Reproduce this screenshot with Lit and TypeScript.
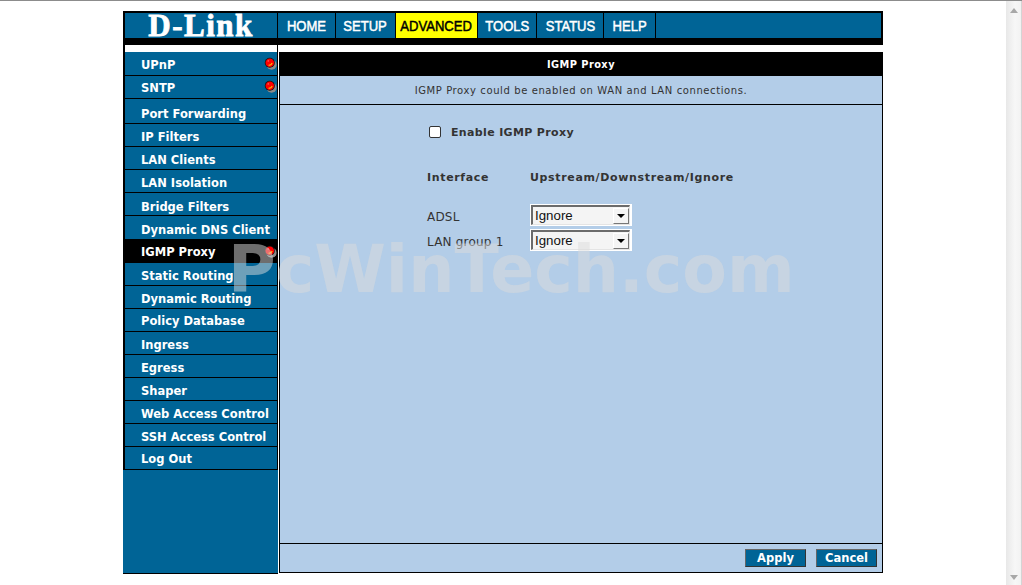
import { LitElement, html, css, svg } from "lit";
import { customElement } from "lit/decorators.js";

const TABS = [
  { label: "HOME", w: 58 },
  { label: "SETUP", w: 60 },
  { label: "ADVANCED", w: 82, active: true },
  { label: "TOOLS", w: 59 },
  { label: "STATUS", w: 67 },
  { label: "HELP", w: 52 },
];

const ROWS = [
  { label: "UPnP", h: 24, pt: 2, dot: true, dy: 5 },
  { label: "SNTP", h: 23, pt: 2, dot: true, dy: 4 },
  { label: "Port Forwarding", h: 25, pt: 5 },
  { label: "IP Filters", h: 23, pt: 3 },
  { label: "LAN Clients", h: 23, pt: 3 },
  { label: "LAN Isolation", h: 23, pt: 3 },
  { label: "Bridge Filters", h: 23, pt: 5 },
  { label: "Dynamic DNS Client", h: 24, pt: 5 },
  { label: "IGMP Proxy", h: 23, pt: 1, dot: true, dy: 5, active: true },
  { label: "Static Routing", h: 23, pt: 3 },
  { label: "Dynamic Routing", h: 23, pt: 3 },
  { label: "Policy Database", h: 23, pt: 1 },
  { label: "Ingress", h: 23, pt: 3 },
  { label: "Egress", h: 23, pt: 3 },
  { label: "Shaper", h: 23, pt: 3 },
  { label: "Web Access Control", h: 23, pt: 3 },
  { label: "SSH Access Control", h: 23, pt: 3 },
  { label: "Log Out", h: 23, pt: 1 },
];

const ball = svg`<svg width="13" height="13" viewBox="0 0 13 13">
  <circle cx="7.6" cy="7.8" r="5" fill="#8a8a8a"/>
  <circle cx="5.8" cy="5.8" r="5" fill="#111"/>
  <circle cx="5.8" cy="5.8" r="4.3" fill="#ff0000"/>
  <path d="M4.6 8.4 Q7.4 8.2 8.2 6" stroke="#ffb400" stroke-width="1.2" fill="none"/>
  <circle cx="4.2" cy="3.9" r="0.7" fill="#ff8a8a"/>
</svg>`;

@customElement("select-box")
class SelectBox extends LitElement {
  static styles = css`
    :host { display: block; }
    .halo { width: 102px; height: 22px; box-sizing: border-box; background: #fff; padding: 1px 2px 1px 1px; }
    .box {
      height: 100%; box-sizing: border-box;
      border: solid #6b6b6b; border-width: 2px 1px 1px 2px;
      border-bottom-color: #e4e4e4; border-right-color: #e4e4e4;
      background: #f4f4f4;
      display: flex; align-items: center; justify-content: space-between;
      font: 13.3px "Liberation Sans", Arial, sans-serif; color: #111;
      padding-left: 2px;
    }
    .arrow {
      width: 16px; height: 16px; box-sizing: border-box; background: #f4f4f4;
      border: 1px solid; border-color: #fff #777 #777 #fff;
      display: flex; align-items: center; justify-content: center;
    }
    .arrow i { width: 0; height: 0; border: 4px solid transparent; border-top: 4px solid #000; border-bottom: 0; }
  `;
  render() {
    return html`<div class="halo"><div class="box"><span>Ignore</span><div class="arrow"><i></i></div></div></div>`;
  }
}

@customElement("app-root")
export class AppRoot extends LitElement {
  static styles = css`
    :host { display: block; position: relative; width: 1022px; height: 585px; overflow: hidden; background: #fff; font-family: "DejaVu Sans", Verdana, sans-serif; }
    .topline { height: 1px; background: #8c8c8c; }
    .shell { display: flex; }
    .page { width: 1006px; padding: 10px 0 0 123px; box-sizing: border-box; }
    .scroll {
      width: 16px; height: 584px; box-sizing: border-box; border-right: 1px solid #d4d4d4;
      background: linear-gradient(to right, #e8e8e8, #f7f7f7 60%, #f2f2f2);
      display: flex; flex-direction: column; justify-content: space-between; align-items: center;
      padding: 7px 0 5px;
    }
    .up { width: 0; height: 0; border: 4px solid transparent; border-top: 0; border-bottom: 5px solid #a8a8a8; }
    .down { width: 0; height: 0; border: 4px solid transparent; border-bottom: 0; border-top: 5px solid #a8a8a8; }
    .frame { width: 760px; }
    .head {
      height: 25px; display: flex; background: #006496;
      border: solid #000; border-width: 2px 2px 0 2px;
    }
    .logo {
      width: 152px; border-right: 1px solid #000; color: #fff; text-align: center;
      font: bold 31px/26px "Liberation Serif", serif; letter-spacing: 1.5px;
      -webkit-text-stroke: 0.8px #fff;
    }
    .tab {
      box-sizing: border-box; border-right: 1px solid #000; color: #fff; text-align: center;
      font: 15px/26px "Liberation Sans", sans-serif; flex: none; white-space: nowrap;
      -webkit-text-stroke: 0.5px currentColor;
    }
    .tab span { display: inline-block; transform: scaleX(0.87); transform-origin: center; margin: 0 -8px; }
    .tab.active { background: #ff0; color: #000; }
    .band { height: 7px; background: #000; }
    .gap { height: 7px; display: flex; }
    .gap .l { width: 152px; border-left: 2px solid #000; border-right: 1px solid #000; }
    .body { display: flex; align-items: flex-start; }
    .side { width: 155px; background: #006496; border-bottom: 1px solid #000; height: 522px; box-sizing: border-box; }
    .rows { border-left: 2px solid #000; border-right: 1px solid #000; }
    .row {
      box-sizing: border-box; border-bottom: 1px solid #000; display: flex; align-items: center;
      padding-left: 16px; color: #fff; font-size: 11.5px; font-weight: 700; position: relative;
      white-space: nowrap;
    }
    .row.active { background: #000; }
    .dot { position: absolute; right: 0; line-height: 0; }
    .sep { width: 1px; height: 521px; background: #fff; }
    .main { flex: 1; height: 521px; box-sizing: border-box; display: flex; flex-direction: column; background: #b3cde8; border: solid #000; border-width: 0 1px 1px 1px; }
    .title { height: 24px; background: #000; color: #fff; font-size: 9.8px; letter-spacing: 0.45px; font-weight: 700; display: flex; align-items: center; justify-content: center; }
    .desc { height: 28px; border-bottom: 1px solid #000; color: #333; font-size: 10px; display: flex; align-items: center; justify-content: center; letter-spacing: 0.6px; }
    .content { flex: 1; color: #333; padding: 20px 0 0 147px; }
    .enable { display: flex; align-items: center; gap: 10px; font-size: 11px; letter-spacing: 0.35px; font-weight: 700; padding-left: 2px; height: 14px; }
    .cb { width: 12px; height: 12px; box-sizing: border-box; background: #fff; border: 1px solid #333; border-radius: 2px; }
    .grid { display: grid; grid-template-columns: 103px auto; justify-content: start; margin-top: 32px; }
    .hd { font-size: 11px; font-weight: 700; height: 33px; letter-spacing: 0.65px; white-space: nowrap; }
    .lbl { font-size: 12px; letter-spacing: 0.2px; color: #333; height: 25px; display: flex; align-items: center; }
    .foot { height: 28px; border-top: 1px solid #000; display: flex; justify-content: flex-end; align-items: center; gap: 10px; padding-right: 5px; }
    .btn { width: 61px; height: 18px; box-sizing: border-box; background: #006496; border: 1px solid; border-color: #666 #333 #333 #666; color: #fff; font-size: 11.5px; font-weight: 700; display: flex; align-items: center; justify-content: center; }
    .wm { position: absolute; left: 228px; top: 230px; font: bold 65px/80px "DejaVu Sans", sans-serif; color: rgba(220,220,220,0.5); pointer-events: none; white-space: nowrap; }
  `;

  render() {
    return html`
      <div class="topline"></div>
      <div class="shell">
        <div class="page">
          <div class="frame">
            <div class="head">
              <div class="logo">D-Link</div>
              ${TABS.map(t => html`<div class="tab ${t.active ? "active" : ""}" style="width:${t.w}px"><span>${t.label}</span></div>`)}
            </div>
            <div class="band"></div>
            <div class="gap"><div class="l"></div></div>
            <div class="body">
              <div class="side">
                <div class="rows">
                  ${ROWS.map(r => html`<div class="row ${r.active ? "active" : ""}" style="height:${r.h}px;padding-top:${r.pt}px">
                    ${r.label}${r.dot ? html`<span class="dot" style="top:${r.dy}px">${ball}</span>` : ""}
                  </div>`)}
                </div>
              </div>
              <div class="sep"></div>
              <div class="main">
                <div class="title">IGMP Proxy</div>
                <div class="desc">IGMP Proxy could be enabled on WAN and LAN connections.</div>
                <div class="content">
                  <div class="enable"><span class="cb"></span><span>Enable IGMP Proxy</span></div>
                  <div class="grid">
                    <div class="hd">Interface</div>
                    <div class="hd">Upstream/Downstream/Ignore</div>
                    <div class="lbl">ADSL</div><select-box></select-box>
                    <div class="lbl">LAN group 1</div><select-box></select-box>
                  </div>
                </div>
                <div class="foot"><div class="btn">Apply</div><div class="btn">Cancel</div></div>
              </div>
            </div>
          </div>
        </div>
        <div class="scroll"><i class="up"></i><i class="down"></i></div>
      </div>
      <div class="wm">PcWinTech.com</div>
    `;
  }
}
